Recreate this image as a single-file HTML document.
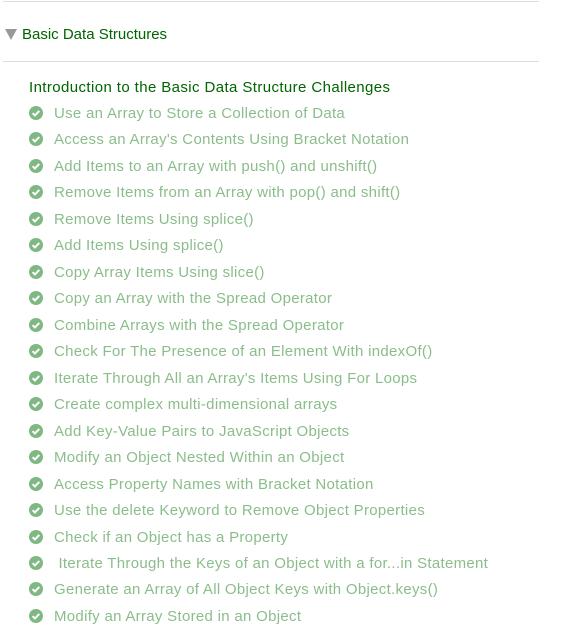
<!DOCTYPE html>
<html><head><style>
body{margin:0;width:571px;height:633px;background:#fff;font-family:"Liberation Sans",sans-serif;overflow:hidden;position:relative}
.hr{position:absolute;left:3px;width:536px;height:1px;background:#ddd}
.h{position:absolute;left:5px;top:26px;font-size:15px;color:#006400}
.h .t{display:inline-block;width:0;height:0;border-left:6px solid transparent;border-right:6px solid transparent;border-top:11px solid #999;margin-right:5px;vertical-align:-1px}
.intro{position:absolute;left:29px;top:79px;font-size:15px;letter-spacing:0.4px;color:#006400}
.it{position:absolute;left:29px;font-size:15px;letter-spacing:0.3px;color:#8bbd8b;height:20px;line-height:20px;white-space:pre}
.it svg{position:absolute;left:0;top:3px}
.it span{position:absolute;left:25px;top:1px}
</style></head><body>
<div class="hr" style="top:1px"></div>
<div class="h"><span class="t"></span>Basic Data Structures</div>
<div class="hr" style="top:61px"></div>
<div class="intro">Introduction to the Basic Data Structure Challenges</div>
<div id="l"></div>
<script>
var a=["Use an Array to Store a Collection of Data","Access an Array's Contents Using Bracket Notation","Add Items to an Array with push() and unshift()","Remove Items from an Array with pop() and shift()","Remove Items Using splice()","Add Items Using splice()","Copy Array Items Using slice()","Copy an Array with the Spread Operator","Combine Arrays with the Spread Operator","Check For The Presence of an Element With indexOf()","Iterate Through All an Array's Items Using For Loops","Create complex multi-dimensional arrays","Add Key-Value Pairs to JavaScript Objects","Modify an Object Nested Within an Object","Access Property Names with Bracket Notation","Use the delete Keyword to Remove Object Properties","Check if an Object has a Property"," Iterate Through the Keys of an Object with a for...in Statement","Generate an Array of All Object Keys with Object.keys()","Modify an Array Stored in an Object"];
var h="";a.forEach(function(t,i){var y=103+i*26.47;h+='<div class="it" style="top:'+y+'px"><svg width="14" height="14" viewBox="0 0 14 14"><circle cx="7" cy="7" r="7" fill="#80b884"/><path d="M3.6 7.2l2.3 2.3 4.4-4.6" stroke="#fff" stroke-width="2" fill="none"/></svg><span>'+t+'</span></div>';});
document.getElementById("l").innerHTML=h;
</script>
</body></html>
